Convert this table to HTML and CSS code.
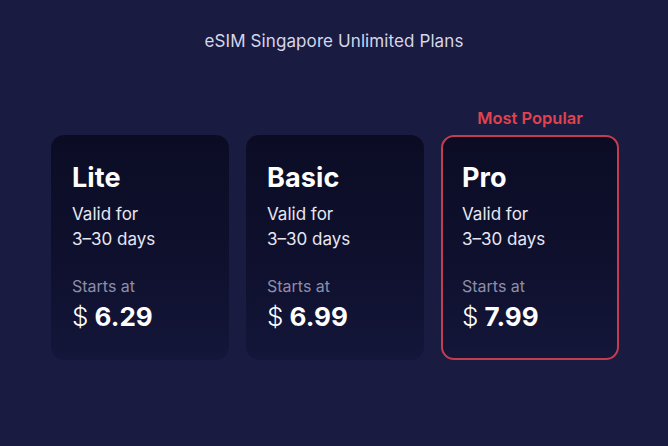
FILE: index.html
```html
<!DOCTYPE html>
<html>
<head>
<meta charset="utf-8">
<link rel="stylesheet" href="styles.css">
</head>
<body>
<div class="page">
  <h1 class="heading">eSIM Singapore Unlimited Plans</h1>
  <div class="plans">
    <div class="col">
      <div class="card">
        <div class="name">Lite</div>
        <div class="valid">Valid for<br>3–30 days</div>
        <div class="starts">Starts at</div>
        <div class="price"><span class="cur">$</span> 6.29</div>
      </div>
    </div>
    <div class="col">
      <div class="card">
        <div class="name">Basic</div>
        <div class="valid">Valid for<br>3–30 days</div>
        <div class="starts">Starts at</div>
        <div class="price"><span class="cur">$</span> 6.99</div>
      </div>
    </div>
    <div class="col">
      <div class="badge">Most Popular</div>
      <div class="card card-pop">
        <div class="name">Pro</div>
        <div class="valid">Valid for<br>3–30 days</div>
        <div class="starts">Starts at</div>
        <div class="price"><span class="cur">$</span> 7.99</div>
      </div>
    </div>
  </div>
</div>
</body>
</html>
```
FILE: styles.css
```css
html, body {
  margin: 0;
  padding: 0;
  background: #1a1b40;
  width: 668px;
  height: 446px;
  overflow: hidden;
  font-family: Inter, "Noto Sans", sans-serif;
}
.page {
  display: flex;
  flex-direction: column;
  align-items: center;
  padding-top: 30px;
}
.heading {
  margin: 0;
  font-size: 17px;
  line-height: 22px;
  font-weight: 400;
  color: #d4d6ec;
  letter-spacing: 0.1px;
}
.plans {
  display: flex;
  gap: 17px;
  align-items: flex-end;
  margin-top: 56px;
  margin-left: 2px;
}
.col {
  display: flex;
  flex-direction: column;
  align-items: center;
}
.badge {
  color: #e0434f;
  font-size: 16.5px;
  font-weight: 600;
  line-height: 20px;
  margin-bottom: 7px;
}
.card {
  box-sizing: border-box;
  width: 178px;
  height: 225px;
  border-radius: 13px;
  background: linear-gradient(180deg, #0b0c24 0%, #0f102d 55%, #14163a 100%);
  padding: 27px 21px 0 21px;
  color: #fff;
  align-self: stretch;
}
.card-pop {
  border: 2px solid #c23d4d;
  padding: 25px 19px 0 19px;
}
.name {
  font-size: 27px;
  font-weight: 700;
  line-height: 32px;
  letter-spacing: 0.1px;
}
.valid {
  margin-top: 8px;
  font-size: 17px;
  line-height: 25px;
  color: #e6e7f3;
}
.starts {
  margin-top: 23px;
  font-size: 16px;
  line-height: 22px;
  color: #8c8ea8;
}
.price {
  margin-top: 4px;
  font-size: 26px;
  font-weight: 700;
  line-height: 32px;
}
.cur {
  font-weight: 300;
}
```
